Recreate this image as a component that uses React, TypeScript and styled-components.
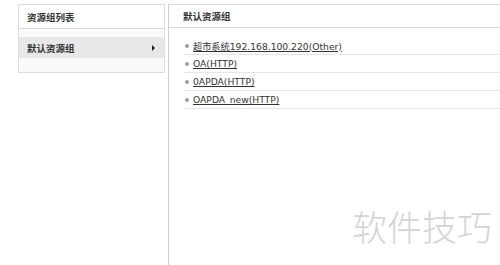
import React from 'react';
import styled, { createGlobalStyle } from 'styled-components';

const GlobalStyle = createGlobalStyle`
  html, body {
    margin: 0;
    padding: 0;
    background: #fff;
  }
  body {
    font-family: "DejaVu Sans", "Noto Sans CJK SC", sans-serif;
    color: #333;
  }
`;

const Page = styled.div`
  position: relative;
  display: flex;
  align-items: flex-start;
  gap: 3px;
  height: 100vh;
  box-sizing: border-box;
  padding: 4px 0 0 18px;
  overflow: hidden;
`;

const Sidebar = styled.aside`
  width: 147px;
  flex-shrink: 0;
  box-sizing: border-box;
  border: 1px solid #dcdcdc;
  background: #fafafa;
`;

const PanelTitle = styled.div<{ $indent: number; $height: number }>`
  height: ${({ $height }) => $height}px;
  display: flex;
  align-items: center;
  padding-left: ${({ $indent }) => $indent}px;
  background: #fff;
  border-bottom: 1px solid #d9d9d9;
  font-family: "Noto Sans CJK SC", sans-serif;
  font-size: 9.5px;
  font-weight: 700;
  color: #333;
`;

const GroupList = styled.div`
  padding: 8px 0 14px;
`;

const GroupItem = styled.div<{ $active?: boolean }>`
  height: 21px;
  display: flex;
  align-items: center;
  justify-content: space-between;
  padding: 0 8px 0 8px;
  background: ${({ $active }) => ($active ? '#e8e8e8' : 'transparent')};
  font-family: "Noto Sans CJK SC", sans-serif;
  font-size: 9.5px;
  font-weight: 700;
  color: #333;
  cursor: pointer;
`;

const Arrow = styled.span`
  width: 0;
  height: 0;
  margin-right: 1px;
  border-left: 3px solid #222;
  border-top: 3px solid transparent;
  border-bottom: 3px solid transparent;
`;

const Main = styled.main`
  flex: 1;
  align-self: stretch;
  border-left: 1px solid #cfcfcf;
  border-top: 1px solid #dcdcdc;
  background: #fff;
`;

const ResourceList = styled.ul`
  list-style: none;
  margin: 0 0 0 15px;
  padding: 9px 0 0;
`;

const ResourceRow = styled.li`
  height: 17px;
  display: flex;
  align-items: center;
  padding-left: 1px;
  border-bottom: 1px solid #e6e6e6;
`;

const Bullet = styled.span`
  width: 4px;
  height: 4px;
  border-radius: 50%;
  background: #a0a0a0;
  margin-right: 4px;
`;

const ResourceLink = styled.a`
  font-size: 9.2px;
  color: #333;
  text-decoration: underline;
  cursor: pointer;
`;

const Watermark = styled.div`
  position: absolute;
  left: 352px;
  top: 208px;
  font-family: "Noto Sans CJK SC", sans-serif;
  font-size: 35px;
  font-weight: 300;
  line-height: 1;
  color: #d4d4d4;
  pointer-events: none;
`;

const resources = [
  '超市系统192.168.100.220(Other)',
  'OA(HTTP)',
  '0APDA(HTTP)',
  'OAPDA_new(HTTP)',
];

export default function App() {
  return (
    <>
      <GlobalStyle />
      <Page>
        <Sidebar>
          <PanelTitle $indent={8} $height={23}>资源组列表</PanelTitle>
          <GroupList>
            <GroupItem $active>
              默认资源组
              <Arrow />
            </GroupItem>
          </GroupList>
        </Sidebar>

        <Main>
          <PanelTitle $indent={14} $height={22}>默认资源组</PanelTitle>
          <ResourceList>
            {resources.map(r => (
              <ResourceRow key={r}>
                <Bullet />
                <ResourceLink>{r}</ResourceLink>
              </ResourceRow>
            ))}
          </ResourceList>
        </Main>

        <Watermark>软件技巧</Watermark>
      </Page>
    </>
  );
}
